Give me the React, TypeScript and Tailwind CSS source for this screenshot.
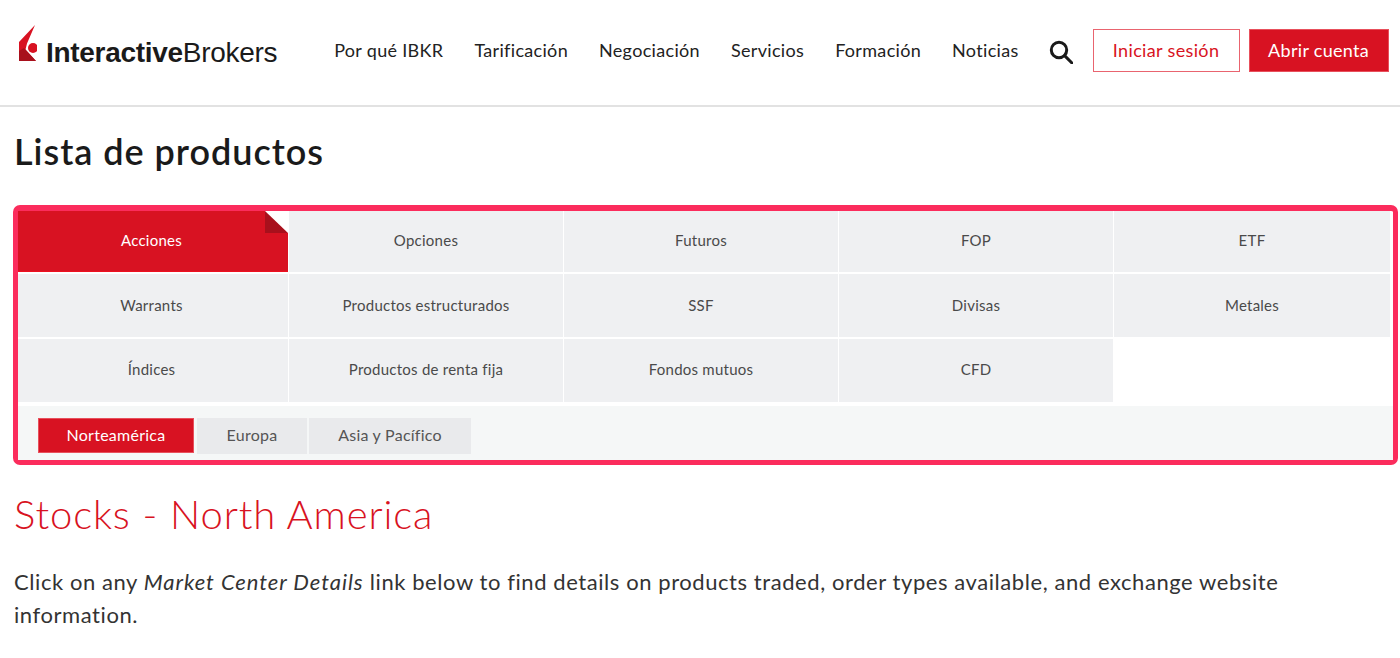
const nav = ["Por qué IBKR", "Tarificación", "Negociación", "Servicios", "Formación", "Noticias"];
const rows = [
  ["Acciones", "Opciones", "Futuros", "FOP", "ETF"],
  ["Warrants", "Productos estructurados", "SSF", "Divisas", "Metales"],
  ["Índices", "Productos de renta fija", "Fondos mutuos", "CFD"],
];
const rowHeights = ["h-[61px]", "h-[63px]", "h-[63px]"];
const rowPad = [" pb-[2px]", "", " pb-[2px]"];
const colWidths = ["w-[270px] pr-[3px]", "w-[274px]", "w-[274px]", "w-[274px]", "w-[276px]"];

function Logo() {
  return (
    <div className="flex items-end shrink-0 mb-[19px]">
      <svg width="18" height="36" viewBox="0 0 18 36" className="mb-[1px]">
        <path d="M0 17 16 0 8 18.5 6.5 24.5 17 36H0Z" fill="#d81222" />
        <path d="M0 36V26L5 23 17 36Z" fill="#a8101c" />
        <circle cx="14" cy="23" r="5" fill="#d81222" />
      </svg>
      <span className="ml-[9px] -mb-[6px] whitespace-nowrap text-[28px] leading-[31px] tracking-[-0.3px] text-[#1a1a1a] font-['Liberation_Sans',sans-serif]">
        <span className="font-bold">Interactive</span>Brokers
      </span>
    </div>
  );
}

export default function App() {
  return (
    <div className="w-[1400px] h-[658px] overflow-hidden bg-white font-['Lato',sans-serif] text-[#1f1f1f]">
      <header className="h-[107px] border-b-2 border-[#e2e2e2] flex items-center pl-[19px] pr-[11px]">
        <Logo />
        <nav className="ml-[57px] mb-[4px] flex gap-[31px] whitespace-nowrap text-[18px] tracking-[0.32px] text-[#222]">
          {nav.map((n) => (
            <span key={n}>{n}</span>
          ))}
        </nav>
        <svg width="24" height="24" viewBox="0 0 24 24" fill="none" stroke="#1a1a1a" strokeWidth="3" className="ml-[30px] mb-[2px] shrink-0">
          <circle cx="10" cy="10" r="7.7" />
          <path d="M15.6 15.6 23 23" strokeLinecap="round" />
        </svg>
        <button className="ml-[20px] mb-[5px] h-[43px] w-[147px] shrink-0 border border-[#e9646f] text-[#d81222] text-[18px] tracking-[0.35px]">
          Iniciar sesión
        </button>
        <button className="ml-[9px] mb-[5px] h-[43px] w-[140px] shrink-0 bg-[#d81222] border border-[#e8505c] text-white text-[18px] tracking-[0.3px]">
          Abrir cuenta
        </button>
      </header>

      <main className="px-[14px]">
        <h1 className="mt-[21px] text-[36px] leading-[46px] font-semibold tracking-[0.97px] text-[#1a1a1a]">Lista de productos</h1>

        <div className="mt-[31px] -ml-[1px] w-[1385px] h-[260px] border-[5px] border-t-[6px] border-[#fb2c5c] rounded-[7px] bg-white flex flex-col">
          <div className="flex flex-col gap-[2px] h-[191px]">
            {rows.map((row, r) => (
              <div key={r} className={"flex gap-[1px] " + rowHeights[r]}>
                {row.map((c, i) => {
                  const active = c === "Acciones";
                  return (
                    <div
                      key={c}
                      className={
                        "relative flex items-center justify-center text-[15px] tracking-[0.25px] " +
                        colWidths[i] +
                        rowPad[r] +
                        (active ? " bg-[#d81222] border-b border-[#ee1020] text-white" : " bg-[#eff0f2] text-[#4a4a4a]")
                      }
                    >
                      {c}
                      {active && (
                        <svg width="23" height="22" viewBox="0 0 23 22" className="absolute top-0 right-0">
                          <path d="M0 0H1L23 22H0Z" fill="#a8101c" />
                          <path d="M0 0H23V22Z" fill="#fff" />
                        </svg>
                      )}
                    </div>
                  );
                })}
              </div>
            ))}
          </div>
          <div className="mt-[4px] flex-1 bg-[#f5f7f7] flex items-start pl-[20px] pt-[12px] text-[16px] tracking-[0.25px]">
            <div className="h-[35px] w-[156px] pb-[2px] bg-[#d81222] border border-[#e8505c] text-white flex items-center justify-center">Norteamérica</div>
            <div className="ml-[3px] h-[36px] w-[110px] pb-[2px] bg-[#e9eaec] text-[#555] flex items-center justify-center">Europa</div>
            <div className="ml-[2px] h-[36px] w-[162px] pb-[2px] bg-[#e9eaec] text-[#555] flex items-center justify-center">Asia y Pacífico</div>
          </div>
        </div>

        <h2 className="mt-[22px] text-[40px] leading-[54px] font-light tracking-[0.9px] text-[#d81222]">Stocks - North America</h2>
        <p className="mt-[24px] w-[1300px] text-[22px] leading-[33px] font-normal tracking-[0.57px] text-[#333]">
          Click on any <em className="tracking-[0.95px]">Market Center Details</em> link below to find details on products traded, order types available, and exchange website information.
        </p>
      </main>
    </div>
  );
}
